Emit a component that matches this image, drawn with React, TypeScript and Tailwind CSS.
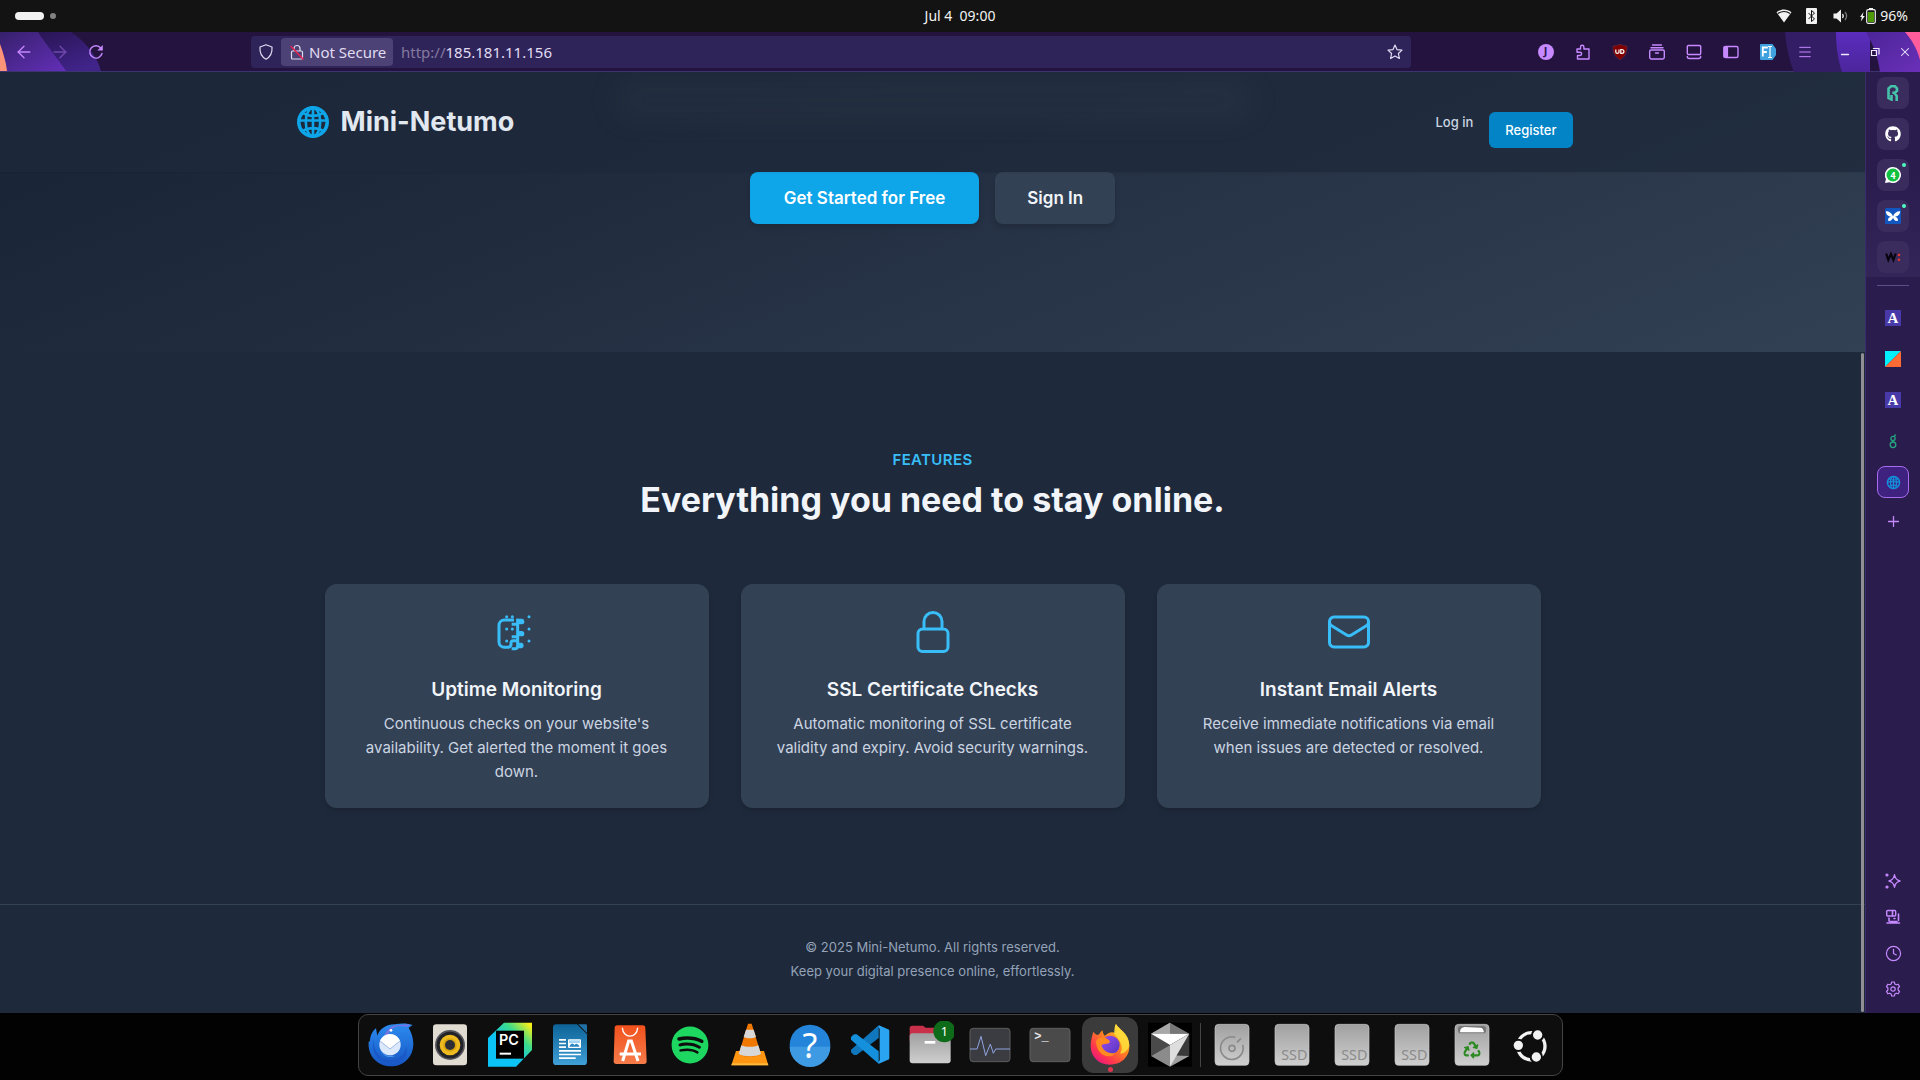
import React from "react";
import { FaGithub, FaRecycle, FaSpotify } from "react-icons/fa";
import { ArrowLeft, ArrowRight, Menu, Plus, Clock, X } from "lucide-react";

type P = { children?: React.ReactNode; className?: string };

/* ---------- shared helpers ---------- */

const Line16 = ({ children, className = "size-4" }: P) => (
  <svg viewBox="0 0 16 16" className={className} fill="none" stroke="currentColor" strokeWidth="1.2" strokeLinecap="round" strokeLinejoin="round" aria-hidden="true">
    {children}
  </svg>
);

const Art = ({ children }: P) => (
  <svg viewBox="0 0 144 144" className="size-12" aria-hidden="true">
    {children}
  </svg>
);

const Globe = ({ className }: P) => (
  <svg viewBox="0 0 40 40" className={className} fill="none" stroke="currentColor" strokeWidth="2.6" aria-hidden="true">
    <circle cx="20" cy="20" r="14.2" strokeWidth="3.6" />
    <ellipse cx="20" cy="20" rx="7.2" ry="14.4" />
    <path d="M20 6v28M6 18.5h28M9 10.5c6.500 4.500 15.500 4.500 22 0M9 29.500c6.500-4.500 15.500-4.500 22 0" />
  </svg>
);

/* ---------- system bar ---------- */

const SystemBar = () => (
  <header className="grid h-8 grid-cols-3 items-center bg-[#131313] px-[15px] font-['Noto_Sans',sans-serif] text-sm text-[#f2f2f2]">
    <div className="flex items-center gap-[6px]">
      <span className="h-2 w-[29px] rounded-full bg-[#f2f2f2]" />
      <span className="size-[6px] rounded-full bg-[#808080]" />
    </div>
    <p className="whitespace-pre text-center leading-8">Jul 4  09:00</p>
    <div className="-mr-[3px] flex items-center justify-end">
      <svg viewBox="0 0 16 14" className="mr-[14px] h-[14px] w-4" aria-hidden="true">
        <path d="M0.500 3.200C5 -0.300 11 -0.300 15.500 3.200L8 13.500Z" fill="#f2f2f2" />
        <path d="M1.800 4.500c4-2.600 8.400-2.600 12.400 0" stroke="#131313" strokeWidth="1.200" fill="none" />
      </svg>
      <svg viewBox="0 0 11 16" className="mr-4 h-4 w-[11px]" aria-hidden="true">
        <rect width="11" height="16" rx="1" fill="#f2f2f2" />
        <path d="M2.500 5l6 6L5.500 13.500v-11L8.500 5l-6 6" stroke="#131313" fill="none" />
      </svg>
      <svg viewBox="0 0 16 14" className="mr-[10px] h-[14px] w-4" fill="none" stroke="#f2f2f2" strokeWidth="1.300" aria-hidden="true">
        <path d="M0.500 4.500h3L8 0.500v13L3.500 9.500h-3z" fill="#f2f2f2" stroke="none" />
        <path d="M9.500 5c1 1.300 1 2.700 0 4" />
        <path d="M12 3c2 2.500 2 5.500 0 8" stroke="#777" />
      </svg>
      <svg viewBox="0 0 17 16" className="mr-1 h-4 w-[17px]" aria-hidden="true">
        <path d="M4.500 4L1 9h1.800L1.800 13.500 5.800 8H3.700z" fill="#f2f2f2" />
        <path d="M10 0h4v1.500h-4z" fill="#f2f2f2" />
        <rect x="7.700" y="1.700" width="8.600" height="13.600" rx="1.500" stroke="#f2f2f2" strokeWidth="1.200" fill="none" />
        <rect x="9" y="4" width="6" height="10" fill="#4e9a06" />
      </svg>
      <span className="leading-8">96%</span>
    </div>
  </header>
);

/* ---------- browser toolbar ---------- */

const ThemeLeft = () => (
  <svg viewBox="0 0 120 39" className="absolute left-0 top-0 h-[39px] w-[120px]" aria-hidden="true">
    <defs>
      <linearGradient id="tl1" x1="0" y1="0" x2="1" y2="1">
        <stop offset="0" stopColor="#36206b" />
        <stop offset="1" stopColor="#632fb8" />
      </linearGradient>
      <linearGradient id="tl2" x1="0" y1="0" x2="0.600" y2="1">
        <stop offset="0" stopColor="#2a1554" />
        <stop offset="1" stopColor="#40248a" />
      </linearGradient>
    </defs>
    <path d="M38 0h33c15 10 26 24 30 39H60z" fill="url(#tl2)" />
    <path d="M0 0h38c9 14 20 27 28 39H0z" fill="url(#tl1)" />
    <path d="M0 12c3 8 6 18 7 27H0z" fill="#ff9478" />
  </svg>
);

const ThemeRight = () => (
  <svg viewBox="0 0 140 40" className="absolute right-0 top-0 h-10 w-[140px]" aria-hidden="true">
    <defs>
      <linearGradient id="tr1" x1="0" y1="0" x2="1" y2="1">
        <stop offset="0" stopColor="#4b2598" />
        <stop offset="1" stopColor="#6a30b8" />
      </linearGradient>
      <linearGradient id="tr2" x1="0" y1="0" x2="0" y2="1">
        <stop offset="0" stopColor="#5a2dbd" />
        <stop offset="1" stopColor="#4c259c" />
      </linearGradient>
    </defs>
    <path d="M5 0h60v40H14C9 28 6 14 5 0z" fill="#331d64" />
    <path d="M56 0h34v40H62C58 28 56 14 56 0z" fill="url(#tr2)" />
    <path d="M86 0h54v40h-40C98 25 93 12 86 0z" fill="url(#tr1)" />
    <path d="M125 0h15v28C137 16 131 7 125 0z" fill="#ff5c9c" />
  </svg>
);

const ToolButton = ({ label, children }: { label: string; children: React.ReactNode }) => (
  <button type="button" aria-label={label} className="flex h-full w-[37px] items-center justify-center">
    {children}
  </button>
);

const NavButton = ({ label, children }: { label: string; children: React.ReactNode }) => (
  <button type="button" aria-label={label} className="flex h-full w-9 items-center justify-center">
    {children}
  </button>
);

const Toolbar = () => (
  <nav aria-label="Browser" className="relative h-10 border-b border-[#3c3470] bg-[#24133f] font-['Noto_Sans',sans-serif] text-[15px] text-[#c689ff]">
    <ThemeLeft />
    <ThemeRight />
    <div className="relative flex h-[39px] items-center">
      <div className="flex h-full w-[251px] shrink-0 items-center pl-[6px]">
        <NavButton label="Back"><ArrowLeft className="size-5" strokeWidth={1.6} /></NavButton>
        <NavButton label="Forward"><ArrowRight className="size-5 opacity-40" strokeWidth={1.6} /></NavButton>
        <NavButton label="Reload">
          <Line16>
            <path d="M14 9.500A6.200 6.200 0 1 1 12.800 4" strokeWidth="1.400" />
            <path d="M14.800 1v5.500H9.300z" fill="currentColor" stroke="none" />
          </Line16>
        </NavButton>
      </div>

      <div className="flex h-8 min-w-0 flex-1 items-center rounded bg-[#2f245a] text-[#e0dcf2]">
        <button type="button" aria-label="Tracking protection" className="flex w-[30px] justify-center">
          <Line16><path d="M8 .8L14 3c.4 5-1 9.500-6 12.200C3 12.500 1.600 8 2 3z" /></Line16>
        </button>
        <button type="button" className="flex h-7 w-28 items-center gap-1 rounded bg-[#4c4275] pl-2">
          <Line16>
            <path d="M5 7V4.500a3 3 0 0 1 6 0V7M3.500 7h9a1 1 0 0 1 1 1v6a1 1 0 0 1-1 1h-9a1 1 0 0 1-1-1V8a1 1 0 0 1 1-1z" />
            <path d="M2 2.500l12 12.500" stroke="#e8204f" strokeWidth="1.500" />
          </Line16>
          <span className="leading-7">Not Secure</span>
        </button>
        <a href="http://185.181.11.156" className="flex-1 pl-2 leading-8"><span className="text-[#83799f]">http://</span>185.181.11.156</a>
        <button type="button" aria-label="Bookmark this page" className="flex w-8 justify-center">
          <Line16><path d="M8 1l2 4.600 5 .5-3.600 3.400 1 5L8 12l-4.400 2.500 1-5L1 6.100l5-.5z" /></Line16>
        </button>
      </div>

      <div className="ml-[116px] flex h-full shrink-0">
        <ToolButton label="Account">
          <span className="flex size-4 items-center justify-center rounded-full bg-[#c689ff] text-[11px] font-bold text-[#2a1650]">J</span>
        </ToolButton>
        <ToolButton label="Extensions">
          <Line16><path d="M2 5h3.500V3a1.700 1.700 0 0 1 3.400 0v2H14v10H2.500v-3.500H5a1.600 1.600 0 0 0 0-3.300H2z" strokeWidth="1.400" /></Line16>
        </ToolButton>
        <ToolButton label="uBlock Origin">
          <svg viewBox="0 0 16 16" className="size-4" aria-hidden="true">
            <path d="M8 .3c2.500 1 4.500 1.600 7 1.700.3 6-1.500 10.500-7 13.700C2.500 12.500.7 8 1 2c2.500-.1 4.500-.7 7-1.700z" fill="#800000" stroke="#5c3350" strokeWidth=".6" />
            <path d="M3.800 5.500v2.800c0 1.400 3.200 1.400 3.200 0V5.500M8.800 5.500v3.800h.9c3 0 3-3.800 0-3.800z" stroke="#fff" strokeWidth="1.200" fill="none" />
          </svg>
        </ToolButton>
        <ToolButton label="Library">
          <Line16><path d="M3.500 1h9M2 3.700h12M2 6h12a1.300 1.300 0 0 1 1.300 1.300v6A1.700 1.700 0 0 1 13.600 15H2.400a1.700 1.700 0 0 1-1.700-1.700v-6A1.300 1.300 0 0 1 2 6zM6.500 9h3" strokeWidth="1.400" /></Line16>
        </ToolButton>
        <ToolButton label="Bottom panel">
          <Line16><path d="M2.500 1.500h11a1.200 1.200 0 0 1 1.200 1.200v6.600a1.200 1.200 0 0 1-1.200 1.200h-11a1.200 1.200 0 0 1-1.200-1.200V2.700a1.200 1.200 0 0 1 1.200-1.200zM1.300 12.500a2 2 0 0 0 2 2h9.400a2 2 0 0 0 2-2" strokeWidth="1.400" /></Line16>
        </ToolButton>
        <ToolButton label="Sidebars">
          <Line16>
            <rect x="1" y="2.500" width="14" height="11" rx="1.500" strokeWidth="1.400" />
            <path d="M1 3h3.500v10H1z" fill="currentColor" />
          </Line16>
        </ToolButton>
        <ToolButton label="Font finder">
          <svg viewBox="0 0 16 16" className="size-4" aria-hidden="true">
            <path d="M1 0h11.500L16 5v6l-3.500 5H1a1 1 0 0 1-1-1V1a1 1 0 0 1 1-1z" fill="#3fa2df" />
            <path d="M2.800 12.500v-9h5M2.800 8h4" stroke="#fff" strokeWidth="1.800" fill="none" />
            <path d="M8 2.500h4M8 13.500h4M10 2.500v11" stroke="#fff" strokeWidth="1.200" />
          </svg>
        </ToolButton>
        <ToolButton label="Menu"><Menu className="size-4" strokeWidth={1.500} /></ToolButton>
      </div>
      <div className="ml-[7px] flex h-full shrink-0 text-[#eee8ff]">
        <button type="button" aria-label="Minimize" className="flex w-[30px] items-center justify-center"><Line16><path d="M4.500 10.500h7" strokeWidth="1.400" /></Line16></button>
        <button type="button" aria-label="Restore" className="flex w-[30px] items-center justify-center"><Line16><path d="M4.500 6.500h5v5h-5zM6.500 4.500h5.500V10" strokeLinecap="square" strokeLinejoin="miter" /></Line16></button>
        <button type="button" aria-label="Close" className="flex w-[30px] items-center justify-center"><X className="size-[14px]" strokeWidth={1.800} /></button>
      </div>
    </div>
  </nav>
);

/* ---------- web page ---------- */

const Stroke24 = ({ d }: { d: string }) => (
  <svg viewBox="0 0 24 24" className="size-12" fill="none" stroke="currentColor" strokeWidth="1.5" strokeLinecap="round" strokeLinejoin="round" aria-hidden="true">
    <path d={d} />
  </svg>
);

const ServerIcon = () => (
  <svg viewBox="0 0 144 144" className="size-12" fill="none" stroke="currentColor" strokeWidth="9" strokeLinejoin="round" aria-hidden="true">
    <path d="M63 36H34a16 16 0 0 0-16 16v50a16 16 0 0 0 16 16h12a9 9 0 0 0 8-9v-4a7 7 0 0 1 7-7h12" />
    <path d="M74 32v80c0 6-2 10-6 10H56M56 49h18M56 86h18" />
    <g fill="currentColor" stroke="none">
      <path d="M70 32h18a8 8 0 0 1 6 8 8 8 0 0 1-8 9H74zM74 69h12a8 8 0 0 1 0 16H74zM74 104h12a9 9 0 0 1 0 17H74z" />
      <circle cx="41" cy="26" r="4.500" /><circle cx="58" cy="26" r="4.500" /><circle cx="108" cy="26" r="4.500" />
      <circle cx="41" cy="63" r="4.500" /><circle cx="58" cy="63" r="4.500" /><circle cx="108" cy="63" r="4.500" />
      <circle cx="41" cy="99" r="4.500" /><circle cx="108" cy="99" r="4.500" />
    </g>
  </svg>
);

const features = [
  {
    title: "Uptime Monitoring",
    text: "Continuous checks on your website's availability. Get alerted the moment it goes down.",
    icon: <ServerIcon />,
  },
  {
    title: "SSL Certificate Checks",
    text: "Automatic monitoring of SSL certificate validity and expiry. Avoid security warnings.",
    icon: <Stroke24 d="M16.5 10.5V6.75a4.5 4.5 0 1 0-9 0v3.75m-.75 11.250h10.500a2.250 2.250 0 0 0 2.250-2.250v-6.750a2.250 2.250 0 0 0-2.250-2.250H6.750a2.250 2.250 0 0 0-2.250 2.250v6.750a2.250 2.250 0 0 0 2.250 2.250Z" />,
  },
  {
    title: "Instant Email Alerts",
    text: "Receive immediate notifications via email when issues are detected or resolved.",
    icon: <Stroke24 d="M21.750 6.750v10.500a2.250 2.250 0 0 1-2.250 2.250h-15a2.250 2.250 0 0 1-2.250-2.250V6.750m19.500 0A2.250 2.250 0 0 0 19.500 4.500h-15a2.250 2.250 0 0 0-2.250 2.250m19.500 0v.243a2.250 2.250 0 0 1-1.070 1.916l-7.500 4.615a2.250 2.250 0 0 1-2.360 0L3.320 8.910a2.250 2.250 0 0 1-1.070-1.916V6.750" />,
  },
];

const WebPage = () => (
  <main className="relative flex min-w-0 flex-1 flex-col bg-[#1e293b] font-['Inter',sans-serif] text-[15px] text-[#f1f5f9]">
    <section className="bg-gradient-to-br from-[#0f172a] via-[#1e293b] to-[#334155] bg-[length:100%_750px] bg-bottom bg-no-repeat">
      <div className="relative overflow-hidden bg-[#1e293b]/75 shadow-xs">
        <div className="absolute left-1/2 top-3 h-8 w-[640px] -translate-x-1/2 rounded-full bg-[#94a3b8]/5 blur-lg" />
        <div className="relative mx-auto flex h-25 max-w-7xl items-center justify-between">
          <a href="#home" className="flex items-center gap-2">
            <Globe className="size-10 text-[#0ea5e9]" />
            <span className="text-[27px] font-bold leading-10 text-[#e2e8f0]">Mini-Netumo</span>
          </a>
          <div className="flex h-5 items-start gap-4 text-[13px] font-medium leading-5">
            <a href="#login" className="text-[#cbd5e1]">Log in</a>
            <a href="#register" className="rounded-md bg-[#0284c7] px-4 py-2 text-white">Register</a>
          </div>
        </div>
      </div>
      <div className="flex justify-center gap-4 pb-32 text-[17px] font-semibold leading-7">
        <a href="#register" className="rounded-lg bg-[#0ea5e9] px-[34px] py-3 text-white shadow-md">Get Started for Free</a>
        <a href="#login" className="rounded-lg bg-[#334155] px-8 py-3 text-[#f1f5f9] shadow-md">Sign In</a>
      </div>
    </section>

    <section className="py-24 text-center">
      <div className="mx-auto max-w-7xl px-8">
        <h2 className="font-semibold uppercase leading-6 tracking-wide text-[#38bdf8]">Features</h2>
        <p className="mt-2 text-[34px] font-bold leading-10">Everything you need to stay online.</p>
        <div className="mt-16 grid grid-cols-3 gap-8">
          {features.map((f) => (
            <article key={f.title} className="flex flex-col items-center rounded-xl bg-[#334155] px-8 py-6 shadow-md">
              <span className="text-[#38bdf8]">{f.icon}</span>
              <h3 className="mt-5 text-[19px] font-semibold leading-7">{f.title}</h3>
              <p className="mt-2 leading-6 text-[#cbd5e1]">{f.text}</p>
            </article>
          ))}
        </div>
      </div>
    </section>

    <footer className="flex-1 border-t border-[#334155] py-8 text-center text-[13px] leading-5 text-[#94a3b8]">
      <p>© 2025 Mini-Netumo. All rights reserved.</p>
      <p className="mt-1">Keep your digital presence online, effortlessly.</p>
    </footer>

    <span className="absolute bottom-px right-px top-[281px] w-[3px] rounded-full bg-[#909094]" />
  </main>
);

/* ---------- browser sidebar ---------- */

const LetterTile = () => (
  <span className="flex size-4 items-center justify-center bg-[#483aa8] font-['Liberation_Serif',serif] text-[15px] font-bold leading-4 text-white">A</span>
);

const pinned = [
  {
    label: "Roadmap",
    dot: false,
    icon: (
      <svg viewBox="0 0 16 16" className="size-4" fill="none" stroke="#45c3a9" strokeWidth="2.600" aria-hidden="true">
        <path d="M3.500 11V3.500L6 1.300h4L12 3.500v2.300L9.800 7.800H7.300M9.300 8l2.400 3v5M3.500 10v3l3 1.500V10" />
      </svg>
    ),
  },
  { label: "GitHub", dot: false, icon: <FaGithub className="size-4 text-white" /> },
  {
    label: "WhatsApp",
    dot: true,
    icon: (
      <svg viewBox="0 0 16 16" className="size-4" aria-hidden="true">
        <path d="M8 0a8 8 0 1 1-3.500 15.200L0 16l1-4A8 8 0 0 1 8 0z" fill="#fff" />
        <circle cx="8" cy="8" r="6.500" fill="#12c042" />
        <text x="8" y="11.500" textAnchor="middle" fontSize="9.500" fontWeight="700" fontFamily="Roboto, sans-serif" fill="#fff">4</text>
      </svg>
    ),
  },
  {
    label: "Mail",
    dot: true,
    icon: (
      <svg viewBox="0 0 16 16" className="size-4" aria-hidden="true">
        <rect width="16" height="16" rx="1.500" fill="#1257c0" />
        <path d="M8 8.500C7 5 4 3 .8 3.200 1 6.500 3.500 8.500 6 8.700 4 9 2.800 10.500 3 12.800 6 13.500 7.500 11.500 8 9.500c.5 2 2 4 5 3.300.2-2.300-1-3.800-3-4.100 2.500-.2 5-2.200 5.200-5.500C12 3 9 5 8 8.500z" fill="#fff" />
      </svg>
    ),
  },
  {
    label: "Wiki",
    dot: false,
    icon: (
      <svg viewBox="0 0 16 16" className="size-4" aria-hidden="true">
        <path d="M1.200 4.500L3.300 11 6 5l2.400 6 2.300-6.500" stroke="#08050e" strokeWidth="2.200" fill="none" />
        <circle cx="14" cy="6" r="1.300" fill="#e0342c" /><circle cx="14" cy="10.700" r="1.300" fill="#e0342c" />
      </svg>
    ),
  },
];

const tabs = [
  { label: "Academy", icon: <LetterTile /> },
  {
    label: "Design board",
    icon: (
      <svg viewBox="0 0 16 16" className="size-4" aria-hidden="true">
        <path d="M0 0h16L0 16z" fill="#00f0ff" /><path d="M16 0v16H0z" fill="#ff6a35" />
      </svg>
    ),
  },
  { label: "Academy library", icon: <LetterTile /> },
  {
    label: "Greenhouse",
    icon: (
      <svg viewBox="0 0 16 16" className="size-4" fill="none" stroke="#24a47f" strokeWidth="1.300" aria-hidden="true">
        <circle cx="8" cy="5.500" r="2.100" /><circle cx="8" cy="11.800" r="2.800" /><path d="M8.800 3.500c1.200-.3 1.600-1.200 1.500-2.300M8 7.700v1.200" />
      </svg>
    ),
  },
];

const tools = [
  {
    label: "AI chatbot",
    icon: (
      <Line16>
        <path d="M9.500 1.800c.8 4 2 5.200 5.500 6.200-3.500 1-4.700 2.200-5.500 6.200C8.700 10.200 7.500 9 4 8c3.500-1 4.700-2.200 5.500-6.200z" strokeWidth="1.400" />
        <circle cx="2" cy="2" r="1" fill="currentColor" /><circle cx="2" cy="14" r="1" fill="currentColor" />
      </Line16>
    ),
  },
  {
    label: "Synced tabs",
    icon: (
      <Line16>
        <rect x="1.700" y="1.500" width="9" height="5.500" rx="1" strokeWidth="1.400" />
        <path d="M7.500 1.500V7M4 9v3M13.500 5v6.500M9 9.500h1M2 14h12.500M5 12.500h7" strokeWidth="1.600" />
      </Line16>
    ),
  },
  { label: "History", icon: <Clock className="size-[17px]" strokeWidth={1.700} /> },
  {
    label: "Settings",
    icon: (
      <Line16>
        <path d="M6.700 1h2.600l.5 1.900 1.500.9 1.900-.6 1.300 2.300L13.100 7v2l1.400 1.500-1.300 2.300-1.900-.6-1.500.9-.5 1.900H6.700l-.5-1.900-1.500-.9-1.900.6-1.300-2.300L2.900 9V7L1.500 5.500l1.300-2.300 1.900.6 1.500-.9z" />
        <circle cx="8" cy="8" r="2.200" />
      </Line16>
    ),
  },
];

const Sidebar = () => (
  <aside className="flex w-[55px] shrink-0 flex-col items-center border-l border-[#3a2d6b] bg-[#2a1c4d] text-[#c689ff]">
    <div className="flex w-full flex-col items-center gap-[9px] bg-gradient-to-b from-[#2a1c4d] via-[#2a1c4d] to-[#332557] pb-1 pt-[5px]">
      {pinned.map((p) => (
        <button key={p.label} type="button" aria-label={p.label} className="relative flex size-8 items-center justify-center rounded-lg bg-[#3a2c5d]">
          {p.icon}
          {p.dot && <span className="absolute right-[3px] top-1 size-1 rounded-full bg-[#4dffc3]" />}
        </button>
      ))}
    </div>
    <hr className="mt-2 w-8 border-[#5f4c88]" />
    <div className="mt-4 flex flex-col items-center gap-[9px]">
      {tabs.map((t) => (
        <button key={t.label} type="button" aria-label={t.label} className="flex size-8 items-center justify-center">{t.icon}</button>
      ))}
      <button type="button" aria-label="Mini-Netumo" className="flex size-8 items-center justify-center rounded-lg border border-[#a86cf0] bg-[#3f2280]">
        <Globe className="size-[17px] text-[#1290dc]" />
      </button>
      <button type="button" aria-label="New tab" className="flex h-7 w-8 items-center justify-center"><Plus className="size-[17px]" strokeWidth={1.800} /></button>
    </div>
    <div className="mt-auto flex flex-col pb-[6px]">
      {tools.map((t) => (
        <button key={t.label} type="button" aria-label={t.label} className="flex size-9 items-center justify-center">{t.icon}</button>
      ))}
    </div>
  </aside>
);

/* ---------- dock ---------- */

const DiskBody = () => <rect x="21" y="10" width="102" height="123" rx="11" fill="url(#disk)" stroke="#c9c9c9" strokeWidth="2" />;

const Ssd = () => (
  <Art>
    <DiskBody />
    <text x="79" y="117" textAnchor="middle" fontSize="43" fontFamily="Noto Sans, sans-serif" fill="#8b8b8b">SSD</text>
  </Art>
);

const dockApps = [
  {
    label: "Thunderbird",
    icon: (
      <Art>
        <path d="M12 60C12 44 20 30 30 22l4 22c6-20 28-34 52-34 20-4 38-4 54 2l-12 8c8 14 14 30 14 48 0 40-30 68-66 68C38 136 4 108 8 62z" fill="url(#tb)" />
        <path d="M54 46c6-20 24-34 46-34l34-2-12 8c-24-8-48 2-56 24z" fill="#8a6fe0" opacity=".8" />
        <circle cx="75" cy="28" r="4" fill="#fff" />
        <path d="M24 52c-6 30 14 64 50 64 30 0 46-20 46-42 10 36-16 54-44 54-40 0-64-36-52-76z" fill="#1a58c8" />
        <circle cx="72" cy="71" r="32" fill="#dce8fb" />
        <path d="M42 60l30 24 30-24c-8-16-20-20-30-20s-22 6-30 20z" fill="#fff" />
        <path d="M42 60l30 24 30-24" fill="none" stroke="#9db8e8" strokeWidth="3" />
        <path d="M44 86c8 16 26 24 44 18-10 8-36 6-44-18z" fill="#5ca8f8" />
      </Art>
    ),
  },
  {
    label: "Rhythmbox",
    icon: (
      <Art>
        <rect x="21" y="10" width="102" height="123" rx="10" fill="#e1dcd2" />
        <circle cx="72" cy="72" r="45" fill="#55565c" /><circle cx="72" cy="72" r="40" fill="#222329" />
        <circle cx="72" cy="72" r="31" fill="#eebb20" /><circle cx="72" cy="72" r="20" fill="#d9a50e" />
        <circle cx="72" cy="72" r="15" fill="#2e2f35" />
      </Art>
    ),
  },
  {
    label: "PyCharm",
    icon: (
      <Art>
        <path d="M6 51L54 5h84v82l-48 50H6z" fill="url(#pc)" />
        <path d="M30 29h84v84H30z" fill="#000" />
        <text x="39" y="72" fontSize="43" fontWeight="600" fontFamily="Inter, sans-serif" fill="#fff">PC</text>
        <path d="M41 95h34v6H41z" fill="#fff" />
      </Art>
    ),
  },
  {
    label: "LibreOffice Writer",
    icon: (
      <Art>
        <path d="M31 10h62l30 30v82a10 10 0 0 1-10 10H31a10 10 0 0 1-10-10V20a10 10 0 0 1 10-10z" fill="url(#lo)" />
        <path d="M97 10h22a4 4 0 0 1 4 4v22z" fill="#2170a5" />
        <g fill="#fff">
          <path d="M39 54h21v5H39zM39 65h21v5H39zM39 76h21v5H39zM39 87h66v5H39zM39 98h66v5H39zM39 109h50v5H39z" />
          <rect x="66" y="55" width="39" height="26" rx="3" />
        </g>
        <path d="M70 77c4-8 8-12 12-8l4 3c4-5 8-6 15 5z" fill="#2a86c0" /><path d="M69 58h33v8H69z" fill="#9fd4f5" />
      </Art>
    ),
  },
  {
    label: "App Center",
    icon: (
      <Art>
        <path d="M34 13h76a8 8 0 0 1 8 8l4 100a8 8 0 0 1-8 8H31a8 8 0 0 1-8-8l3-100a8 8 0 0 1 8-8z" fill="url(#ac)" />
        <path d="M49 20c2 34 44 34 46 0" fill="none" stroke="#fff" strokeWidth="4" />
        <path d="M50 120L68 60h8l20 60M41 99h64" fill="none" stroke="#fff" strokeWidth="9" />
      </Art>
    ),
  },
  { label: "Spotify", icon: <FaSpotify className="size-[38px] text-[#1ed760]" /> },
  {
    label: "VLC",
    icon: (
      <Art>
        <path d="M30 90h84l13 43H16z" fill="#ff9510" /><path d="M18 127h107l2 6H16z" fill="#ffb93a" />
        <path d="M66 8h11l28 92c-12 10-54 10-67 0z" fill="#f07800" />
        <path d="M60 26h23l7 22c-10 5-27 5-37 0zM46 73c14 6 37 6 51 0l8 26c-14 9-53 9-67 0z" fill="#d7d7d7" />
      </Art>
    ),
  },
  {
    label: "Help",
    icon: (
      <Art>
        <circle cx="72" cy="72" r="61" fill="#2484da" />
        <path d="M11 77h122a61 61 0 0 1-122 0z" fill="#3e9be3" />
        <text x="72" y="110" textAnchor="middle" fontSize="102" fontFamily="Noto Sans, sans-serif" fill="#fff">?</text>
      </Art>
    ),
  },
  {
    label: "Visual Studio Code",
    icon: (
      <Art>
        <path d="M98 13L15 86v8l9 8h8l66-51z" fill="#1177bd" />
        <path d="M98 128L15 56v-8l9-8h8l66 51z" fill="#1590dc" />
        <path d="M96 15c2-2 4-2 6-1l24 11c3 1 4 3 4 6v79c0 3-1 5-4 6l-24 11c-2 1-4 1-6-1l5-8V24z" fill="#2aa3f1" />
      </Art>
    ),
  },
  {
    label: "Files",
    icon: (
      <Art>
        <path d="M19 14h32l8 6h50v40H11V22a8 8 0 0 1 8-8z" fill="#c9314b" />
        <rect x="11" y="37" width="123" height="90" rx="9" fill="url(#disk)" />
        <path d="M56 60h32v8H56z" fill="#fff" />
        <circle cx="115" cy="31" r="33" fill="#0d6b19" />
        <text x="115" y="44" textAnchor="middle" fontSize="38" fontFamily="Noto Sans, sans-serif" fill="#fff">1</text>
      </Art>
    ),
  },
  {
    label: "System Monitor",
    icon: (
      <Art>
        <rect x="12" y="22" width="120" height="100" rx="9" fill="#3b3c42" stroke="#5c5c5c" strokeWidth="3" />
        <path d="M12 84h21l12-38 14 58 14-35 9 28 7-13h43" fill="none" stroke="#8fa3e0" strokeWidth="3" />
      </Art>
    ),
  },
  {
    label: "Terminal",
    icon: (
      <Art>
        <rect x="12" y="22" width="120" height="100" rx="9" fill="#4a4a4a" stroke="#5f5f5f" strokeWidth="3" />
        <text x="25" y="56" fontSize="36" fontWeight="700" fontFamily="Liberation Mono, monospace" fill="#e6e6e6">&gt;_</text>
      </Art>
    ),
  },
  {
    label: "Firefox",
    icon: (
      <Art>
        <path d="M22 32c4 6 8 9 14 10 6-2 8-12 14-14 0 6 2 12 6 16 10-8 20-14 32-8 2-10-4-18 2-27 6 14 38 28 40 64 2 34-24 58-58 58-36 0-58-26-58-56 0-16 4-30 8-43z" fill="url(#ff)" />
        <circle cx="73" cy="72" r="28" fill="url(#ffp)" />
        <path d="M84 38c2-12 0-20 6-29 8 16 38 26 40 62-4 22-22 28-28 26 12-16 4-36-18-59z" fill="#ffdf3c" opacity=".85" />
        <path d="M30 60c10-14 24-14 34-6 8 4 10 10 4 13-8 3-14 0-22 6 6 20 28 28 44 22-20 24-60 6-60-35z" fill="#ff8a20" />
      </Art>
    ),
  },
  {
    label: "Cursor",
    icon: (
      <Art>
        <path d="M6 5h132v132H6z" fill="#000" />
        <path d="M72 5l58 33H15z" fill="#777" /><path d="M72 5v33H15z" fill="#a8a8a8" />
        <path d="M15 38v67l57-33z" fill="#4a4a4a" /><path d="M15 105l57-33v65z" fill="#8b8b8b" />
        <path d="M130 38v67l-40-2z" fill="#3a3a3a" /><path d="M130 105l-58 32 16-34z" fill="#a0a0a0" />
        <path d="M15 38h115L72 72z" fill="#fff" /><path d="M130 38L72 72v65z" fill="#dedede" />
      </Art>
    ),
  },
];

const dockPlaces = [
  {
    label: "Disk",
    icon: (
      <Art>
        <DiskBody />
        <path d="M82 49a34 34 0 1 0 22 22M87 64l12-12" fill="none" stroke="#8a8a8a" strokeWidth="5" />
        <circle cx="72" cy="82" r="9" fill="none" stroke="#8a8a8a" strokeWidth="5" />
      </Art>
    ),
  },
  { label: "SSD volume 1", icon: <Ssd /> },
  { label: "SSD volume 2", icon: <Ssd /> },
  { label: "SSD volume 3", icon: <Ssd /> },
  {
    label: "Trash",
    icon: (
      <Art>
        <DiskBody />
        <rect x="30" y="15" width="84" height="22" rx="8" fill="#777" />
        <path d="M36 34c2-14 6-14 14-16l46 2c8 0 10 6 12 14z" fill="#fff" />
        <FaRecycle x="46" y="61" size={52} color="#2b8a22" />
      </Art>
    ),
  },
];

const DockButton = ({ label, children }: { label: string; children: React.ReactNode }) => (
  <button type="button" aria-label={label} className="relative flex h-[60px] w-[60px] items-center justify-center">
    {label === "Firefox" && <span className="absolute left-[2px] top-[2px] size-14 rounded-xl bg-[#3b3b3b]" />}
    <span className="relative">{children}</span>
    {label === "Firefox" && <span className="absolute bottom-[3px] left-[28px] size-[5px] rounded-full bg-[#e0354f]" />}
  </button>
);

const Gradients = () => (
  <svg className="absolute size-0" aria-hidden="true">
    <defs>
      <linearGradient id="disk" x1="0" y1="0" x2="0" y2="1"><stop offset="0" stopColor="#a0a0a0" /><stop offset="1" stopColor="#cfcfcf" /></linearGradient>
      <linearGradient id="tb" x1="0" y1="0" x2="0" y2="1"><stop offset="0" stopColor="#2c8cf0" /><stop offset="1" stopColor="#1756c4" /></linearGradient>
      <linearGradient id="pc" x1="0" y1="1" x2="1" y2="0"><stop offset="0.400" stopColor="#0cc3f5" /><stop offset="0.700" stopColor="#3ddc8a" /><stop offset="0.950" stopColor="#f5f01a" /></linearGradient>
      <linearGradient id="lo" x1="0" y1="0" x2="0" y2="1"><stop offset="0" stopColor="#0d6397" /><stop offset="1" stopColor="#3f9fd6" /></linearGradient>
      <linearGradient id="ac" x1="0" y1="0" x2="0" y2="1"><stop offset="0" stopColor="#f1511c" /><stop offset="1" stopColor="#f67c4a" /></linearGradient>
      <linearGradient id="ff" x1="1" y1="0" x2="0.200" y2="1"><stop offset="0" stopColor="#ffe53c" /><stop offset="0.450" stopColor="#ff8a1c" /><stop offset="0.800" stopColor="#ff3350" /><stop offset="1" stopColor="#e31587" /></linearGradient>
      <linearGradient id="ffp" x1="0" y1="0" x2="1" y2="1"><stop offset="0" stopColor="#9a4cf0" /><stop offset="1" stopColor="#5436c0" /></linearGradient>
    </defs>
  </svg>
);

const Dock = () => (
  <footer className="flex h-[67px] items-start justify-center bg-[#020203] pt-px">
    <Gradients />
    <div className="flex h-[62px] items-center rounded-[10px] border border-[#444] bg-[#0e0e0e] pl-px pr-1">
      {dockApps.map((a) => <DockButton key={a.label} label={a.label}>{a.icon}</DockButton>)}
      <span className="mr-px h-11 w-px bg-[#444]" />
      {dockPlaces.map((a) => <DockButton key={a.label} label={a.label}>{a.icon}</DockButton>)}
      <button type="button" aria-label="Show apps" className="flex h-[60px] w-14 items-center justify-center">
        <Art>
          <circle cx="76" cy="76" r="41" fill="none" stroke="#f2f2f2" strokeWidth="10" />
          <g fill="#f2f2f2" stroke="#0e0e0e" strokeWidth="6">
            <circle cx="37" cy="73" r="17" /><circle cx="95" cy="42" r="17" /><circle cx="91" cy="108" r="17" />
          </g>
        </Art>
      </button>
    </div>
  </footer>
);

export default function App() {
  return (
    <div className="flex min-h-screen flex-col bg-[#020203]">
      <SystemBar />
      <Toolbar />
      <div className="flex flex-1">
        <WebPage />
        <Sidebar />
      </div>
      <Dock />
    </div>
  );
}
